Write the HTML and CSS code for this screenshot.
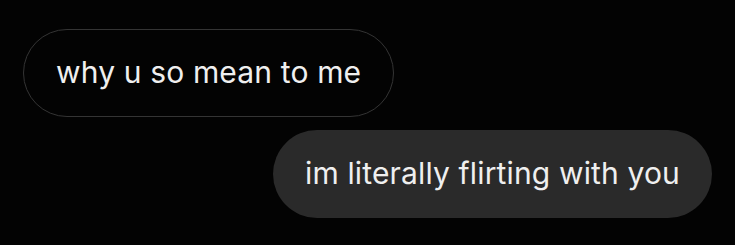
FILE: index.html
```html
<!DOCTYPE html>
<html lang="en">

<head>
    <meta charset="UTF-8">
    <meta name="viewport" content="width=device-width, initial-scale=1.0">
    <title>Chat</title>
    <link rel="stylesheet" href="styles.css">
</head>

<body>
    <!-- 聊天记录 -->
    <div class="chat">
        <div class="bubble received">why u so mean to me</div>
        <div class="bubble sent">im literally flirting with you</div>
    </div>
</body>

</html>
```

FILE: styles.css
```css
* {
    margin: 0;
    padding: 0;
    box-sizing: border-box;
}

body {
    background-color: #030303;
    font-family: "Inter", "Liberation Sans", sans-serif;
}

.chat {
    display: flex;
    flex-direction: column;
    gap: 13px;
    padding: 29px 23px;
}

.bubble {
    display: flex;
    align-items: center;
    height: 88px;
    padding: 0 32px 2px;
    border-radius: 44px;
    color: #efefef;
    font-size: 30px;
    letter-spacing: 0.15px;
}

.received {
    align-self: flex-start;
    border: 1.5px solid #343434;
}

.sent {
    align-self: flex-end;
    background-color: #2a2a2a;
}
```
